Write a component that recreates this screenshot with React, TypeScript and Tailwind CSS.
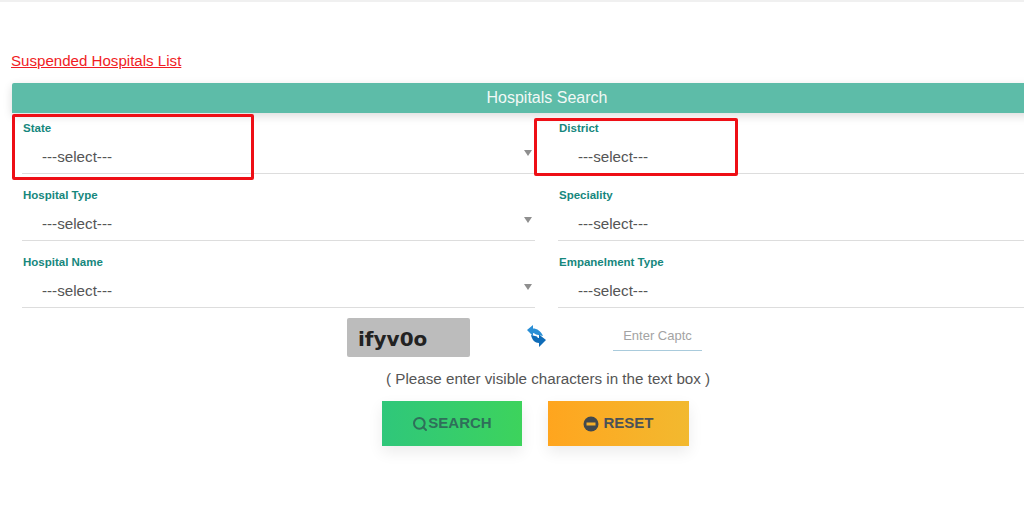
import { Search } from 'lucide-react'

const fields = [
  ['State', 'District'],
  ['Hospital Type', 'Speciality'],
  ['Hospital Name', 'Empanelment Type'],
]

function Field({ label, arrow }: { label: string; arrow: boolean }) {
  return (
    <div className="relative h-[67px] flex-none">
      <div className="pt-[8px] pl-[1px] text-[11.5px] leading-[14px] font-bold text-[#16877d]">{label}</div>
      <div className="mt-[13px] pl-[20px] text-[15.2px] leading-[18px] text-[#555555]">---select---</div>
      <div className="mt-[7px] h-px bg-[#dddddd]" />
      {arrow && (
        <div className="absolute right-[3px] top-[37px] h-0 w-0 border-x-[4.5px] border-t-[6px] border-x-transparent border-t-[#8f8f8f]" />
      )}
    </div>
  )
}

export default function App() {
  return (
    <div className="relative h-[512px] w-[1024px] overflow-hidden bg-white font-['Liberation_Sans',Arial,sans-serif]">
      <div className="h-[2px] bg-[#f0f0f0]" />
      <div className="flex pt-[50px] pl-[11px]">
        <a className="text-[15.1px] leading-[18px] text-[#f01c24] underline">Suspended Hospitals List</a>
      </div>

      <div className="ml-[12px] mt-[13px] flex h-[30px] w-[1070px] items-center justify-center rounded-t-[2px] bg-[#5dbca8] text-[16px] text-[#f2f8f6] shadow-[0_3px_10px_rgba(0,0,0,0.14)]">
        Hospitals Search
      </div>

      <div className="ml-[22px] flex w-[1060px] gap-[23px]">
        <div className="w-[513px]">
          {fields.map((row) => (
            <Field key={row[0]} label={row[0]} arrow />
          ))}
        </div>
        <div className="w-[524px]">
          {fields.map((row) => (
            <Field key={row[1]} label={row[1]} arrow={false} />
          ))}
        </div>
      </div>

      <div className="mt-[4px] flex items-start">
        <div className="ml-[347px] flex h-[39px] w-[123px] items-center rounded-[2px] bg-[#bcbcbc] pl-[11px] pt-[2px] font-['DejaVu_Sans',sans-serif] text-[20px] font-bold text-[#222222]">
          ifyv0o
        </div>
        <svg className="ml-[52px] mt-[4px]" width="28" height="28" viewBox="0 0 28 28" aria-hidden="true">
          <path d="M5 8 L11 3 L11 6.5 C15 6.5 19 9 21 14 L14 12.5 C13 11.5 12 11 11 11 L11 14 Z" fill="#2a8fd6" />
          <path d="M24 18 L17 25 L17 21 C13 21 10 18 9 13 L15 14.5 C15.5 15.5 16 16 17 16 L17 12.5 Z" fill="#0f6cb8" />
        </svg>
        <div className="ml-[63px] flex h-[33px] w-[89px] items-start justify-center border-b border-[#a9cbdc] pt-[10px] text-[13px] leading-[15px] text-[#a3a3a3]">
          Enter Captc
        </div>
      </div>

      <div className="ml-[386px] mt-[13px] text-[15.2px] leading-[18px] text-[#555555]">
        ( Please enter visible characters in the text box )
      </div>

      <div className="ml-[382px] mt-[13px] flex gap-[26px]">
        <div className="flex h-[45px] w-[140px] items-center justify-center bg-gradient-to-r from-[#2fc77a] to-[#3dd35c] text-[15px] font-bold text-[#2f6f5a] shadow-[0_6px_14px_rgba(0,0,0,0.08)]">
          <Search size={16} strokeWidth={3} />
          SEARCH
        </div>
        <div className="flex h-[45px] w-[141px] items-center justify-center gap-[4px] bg-gradient-to-r from-[#ffa51e] to-[#f2b92f] text-[15px] font-bold text-[#4b5257] shadow-[0_6px_14px_rgba(0,0,0,0.08)]">
          <svg width="16" height="16" viewBox="0 0 16 16" aria-hidden="true">
            <circle cx="8" cy="8" r="7.5" fill="#42494e" />
            <rect x="3.5" y="6.5" width="9" height="3" fill="#f5b02a" />
          </svg>
          RESET
        </div>
      </div>

      {/* red annotation boxes */}
      <div className="absolute left-[12px] top-[114px] h-[66px] w-[242px] rounded-[2px] border-[3px] border-[#ee0f16]" />
      <div className="absolute left-[534px] top-[118px] h-[58px] w-[204px] rounded-[2px] border-[3px] border-[#ee0f16]" />
    </div>
  )
}
